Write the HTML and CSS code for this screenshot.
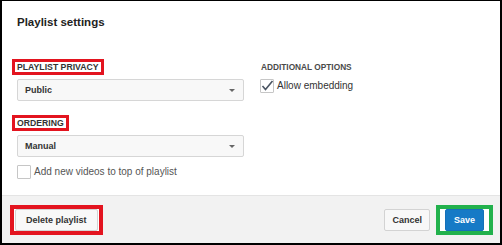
FILE: index.html
```html
<!DOCTYPE html>
<html lang="en">
<head>
  <meta charset="UTF-8" />
  <title>Playlist settings</title>
  <link rel="stylesheet" href="styles.css">
</head>
<body>
  <div class="dialog">
    <h1 class="title">Playlist settings</h1>

    <div class="settings">
      <div class="col">
        <span class="label mark-red">PLAYLIST PRIVACY</span>
        <div class="select"><span>Public</span><i class="caret"></i></div>

        <span class="label mark-red spaced">ORDERING</span>
        <div class="select"><span>Manual</span><i class="caret"></i></div>

        <label class="check check-muted">
          <span class="box"></span>
          Add new videos to top of playlist
        </label>
      </div>

      <div class="col">
        <span class="label label-plain">ADDITIONAL OPTIONS</span>
        <label class="check check-first">
          <span class="box">
            <svg width="14" height="14" viewBox="0 0 14 14"><polyline points="2.5,7 5.5,10.5 12.5,2" fill="none" stroke="#4b5563" stroke-width="1.6"/></svg>
          </span>
          Allow embedding
        </label>
      </div>
    </div>

    <div class="footer">
      <span class="mark-box mark-box-red"><button class="btn btn-wide">Delete playlist</button></span>
      <div class="actions">
        <button class="btn">Cancel</button>
        <span class="mark-box mark-box-green"><button class="btn btn-primary">Save</button></span>
      </div>
    </div>
  </div>
</body>
</html>
```

FILE: styles.css
```css
body {
  margin: 0;
  font-family: "Liberation Sans", Arial, sans-serif;
  background: #fff;
}
.dialog {
  width: 502px;
  height: 245px;
  box-sizing: border-box;
  border: 2px solid #000;
  border-top-width: 1px;
  display: flex;
  flex-direction: column;
  background: #fff;
}
.title {
  margin: 0;
  padding: 14px 15px 0;
  font-size: 11.5px;
  line-height: 14px;
  font-weight: bold;
  color: #222;
}
.settings {
  flex: 1;
  display: grid;
  grid-template-columns: 227px 1fr;
  column-gap: 17px;
  padding: 30px 15px 0;
}
.col {
  display: flex;
  flex-direction: column;
  align-items: flex-start;
}
.label {
  margin-left: -5px;
  padding: 0 2px;
  border: 3px solid transparent;
  font-size: 8.7px;
  line-height: 10px;
  font-weight: bold;
  color: #333;
}
.label-plain { font-size: 8.3px; color: #4a4a4a; }
.mark-red { border-color: #e3141f; }
.spaced { margin-top: 14px; }
.select {
  align-self: stretch;
  height: 22px;
  margin-top: 4px;
  box-sizing: border-box;
  border: 1px solid #d6d6d6;
  border-radius: 2px;
  background: #f8f8f8;
  display: flex;
  align-items: center;
  justify-content: space-between;
  padding: 0 8px 0 7px;
  font-size: 9px;
  font-weight: bold;
  color: #333;
}
.caret {
  width: 0;
  height: 0;
  border-left: 3px solid transparent;
  border-right: 3px solid transparent;
  border-top: 3px solid #666;
}
.check {
  display: flex;
  align-items: center;
  gap: 3px;
  margin-top: 8px;
  font-size: 10px;
  line-height: 14px;
  color: #333;
}
.check-muted { color: #555; }
.check-first { margin-top: 4px; margin-left: -1px; }
.box {
  width: 14px;
  height: 14px;
  box-sizing: border-box;
  border: 1px solid #c6c6c6;
  border-radius: 1px;
  background: #fff;
  position: relative;
}
.box svg {
  position: absolute;
  left: -1px;
  top: -1px;
}
.footer {
  height: 48px;
  box-sizing: border-box;
  border-top: 1px solid #e4e4e4;
  background: #f2f2f2;
  display: flex;
  align-items: center;
  justify-content: space-between;
  padding: 0 7px 0 8px;
}
.actions {
  display: flex;
  align-items: center;
  gap: 6px;
}
.mark-box {
  display: flex;
  background: #fff;
  border: 4px solid;
}
.mark-box-red { border-color: #e3141f; padding: 0 1px; }
.mark-box-green { border-color: #22b14c; padding: 0 5px; }
.btn {
  height: 22px;
  padding: 0 7px;
  border: 1px solid #d3d3d3;
  border-radius: 2px;
  background: #f8f8f8;
  font-family: inherit;
  font-size: 9px;
  font-weight: bold;
  color: #333;
}
.btn-wide { padding: 0 10px; }
.btn-primary {
  padding: 0 8px;
  background: #167ac6;
  border-color: #1570b8;
  color: #fff;
}
```
